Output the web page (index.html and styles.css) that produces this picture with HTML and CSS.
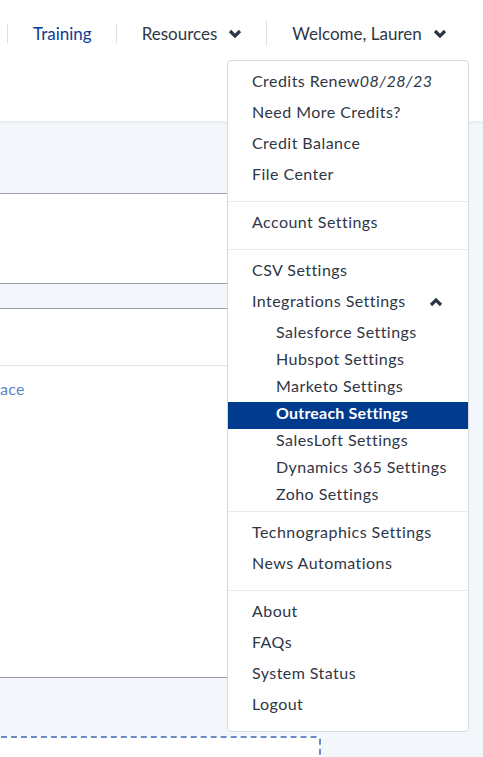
FILE: index.html
```html
<!DOCTYPE html>
<html>

<head>
    <meta charset="UTF-8">
    <link rel="stylesheet" href="styles.css">
</head>

<body>

    <header class="topbar">
        <nav class="nav">
            <span class="nav-sep"></span>
            <a class="nav-link current" href="#">Training</a>
            <span class="nav-sep"></span>
            <a class="nav-link" href="#">Resources
                <svg class="chev" width="14" height="9" viewBox="0 0 14 9">
                    <polyline points="2,2 7,7 12,2" />
                </svg>
            </a>
            <span class="nav-sep tall"></span>
            <a class="nav-link" href="#">Welcome, Lauren
                <svg class="chev" width="14" height="9" viewBox="0 0 14 9">
                    <polyline points="2,2 7,7 12,2" />
                </svg>
            </a>
        </nav>
    </header>

    <main class="page">
        <div class="panel">
            <div class="panel-row head"></div>
            <div class="panel-row body"></div>
            <div class="panel-row strip"></div>
            <div class="panel-row small"></div>
            <div class="panel-row tall">
                <a class="panel-link" href="#">ace</a>
            </div>
        </div>
        <div class="drop-zone"></div>
    </main>

    <div class="user-menu">
        <ul class="menu-group">
            <li><a href="#">Credits Renew<em>08/28/23</em></a></li>
            <li><a href="#">Need More Credits?</a></li>
            <li><a href="#">Credit Balance</a></li>
            <li><a href="#">File Center</a></li>
        </ul>
        <ul class="menu-group">
            <li><a href="#">Account Settings</a></li>
        </ul>
        <ul class="menu-group integrations">
            <li><a href="#">CSV Settings</a></li>
            <li>
                <a class="toggle" href="#">Integrations Settings
                    <svg class="chev up" width="14" height="9" viewBox="0 0 14 9">
                        <polyline points="2,7 7,2 12,7" />
                    </svg>
                </a>
                <ul class="submenu">
                    <li><a href="#">Salesforce Settings</a></li>
                    <li><a href="#">Hubspot Settings</a></li>
                    <li><a href="#">Marketo Settings</a></li>
                    <li class="selected"><a href="#">Outreach Settings</a></li>
                    <li><a href="#">SalesLoft Settings</a></li>
                    <li><a href="#">Dynamics 365 Settings</a></li>
                    <li><a href="#">Zoho Settings</a></li>
                </ul>
            </li>
        </ul>
        <ul class="menu-group">
            <li><a href="#">Technographics Settings</a></li>
            <li><a href="#">News Automations</a></li>
        </ul>
        <ul class="menu-group">
            <li><a href="#">About</a></li>
            <li><a href="#">FAQs</a></li>
            <li><a href="#">System Status</a></li>
            <li><a href="#">Logout</a></li>
        </ul>
    </div>

</body>

</html>
```

FILE: styles.css
```css
body {
    margin: 0;
    background-color: #f3f7fc;
    font-family: Lato, "Open Sans", sans-serif;
    color: #2f3646;
    overflow: hidden;
}

a {
    text-decoration: none;
    color: inherit;
}

.topbar {
    height: 121px;
    background-color: #fff;
    box-shadow: 0 1px 4px rgb(0 0 0 / 8%);
    position: relative;
    z-index: 1;
}

.nav {
    height: 66px;
    display: flex;
    align-items: center;
    padding-left: 7px;
}

.nav-link {
    display: flex;
    align-items: center;
    gap: 11px;
    padding: 0 24px 0 25px;
    font-size: 17px;
    color: #2f3646;
}

.nav-link.current {
    color: #0b3d91;
}

.nav-sep {
    width: 1px;
    height: 19px;
    background-color: #dcdfe3;
}

.nav-sep.tall {
    height: 26px;
}

.chev polyline {
    fill: none;
    stroke: #2f3646;
    stroke-width: 3.2;
}

.page {
    width: 440px;
}

.panel-row {
    background-color: #fff;
    border-bottom: 1px solid #9ca1a9;
}

.panel-row.head {
    height: 72px;
    background-color: #f3f7fc;
}

.panel-row.body {
    height: 89px;
}

.panel-row.strip {
    height: 24px;
    background-color: #f3f7fc;
}

.panel-row.small {
    height: 56px;
    border-bottom-color: #e3e5e8;
}

.panel-row.tall {
    height: 298px;
    padding-top: 13px;
}

.panel-link {
    font-size: 16px;
    line-height: 20px;
    letter-spacing: 0.3px;
    color: #5b86c6;
}

.drop-zone {
    margin: 58px 0 0 -12px;
    width: 329px;
    height: 19px;
    background-color: #fff;
    border: 2px dashed #6a8bc4;
    border-bottom: none;
    border-radius: 3px 3px 0 0;
}

/* dropdown over the page */
.user-menu {
    position: absolute;
    top: 60px;
    left: 227px;
    width: 240px;
    background-color: #fff;
    border: 1px solid #d5d8dc;
    border-radius: 4px;
    z-index: 2;
    font-size: 16px;
    letter-spacing: 0.45px;
    white-space: nowrap;
}

.menu-group {
    list-style: none;
    margin: 0;
    padding: 6px 0 10px;
    border-bottom: 1px solid #e6e8eb;
}

.menu-group:last-child {
    border-bottom: none;
}

.menu-group.integrations {
    padding-bottom: 1px;
}

.menu-group > li > a {
    display: flex;
    align-items: center;
    padding: 4px 24px 8px;
    line-height: 19px;
}

.toggle {
    justify-content: space-between;
}

.toggle .chev {
    margin: 4px 1px 0 0;
}

.submenu {
    list-style: none;
    margin: 3px 0 0;
    padding: 0;
}

.submenu a {
    display: block;
    padding: 1px 10px 7px 48px;
    line-height: 19px;
}

.submenu .selected a {
    background-color: #003b8e;
    color: #fff;
    font-weight: 700;
    letter-spacing: 0.2px;
}
```
